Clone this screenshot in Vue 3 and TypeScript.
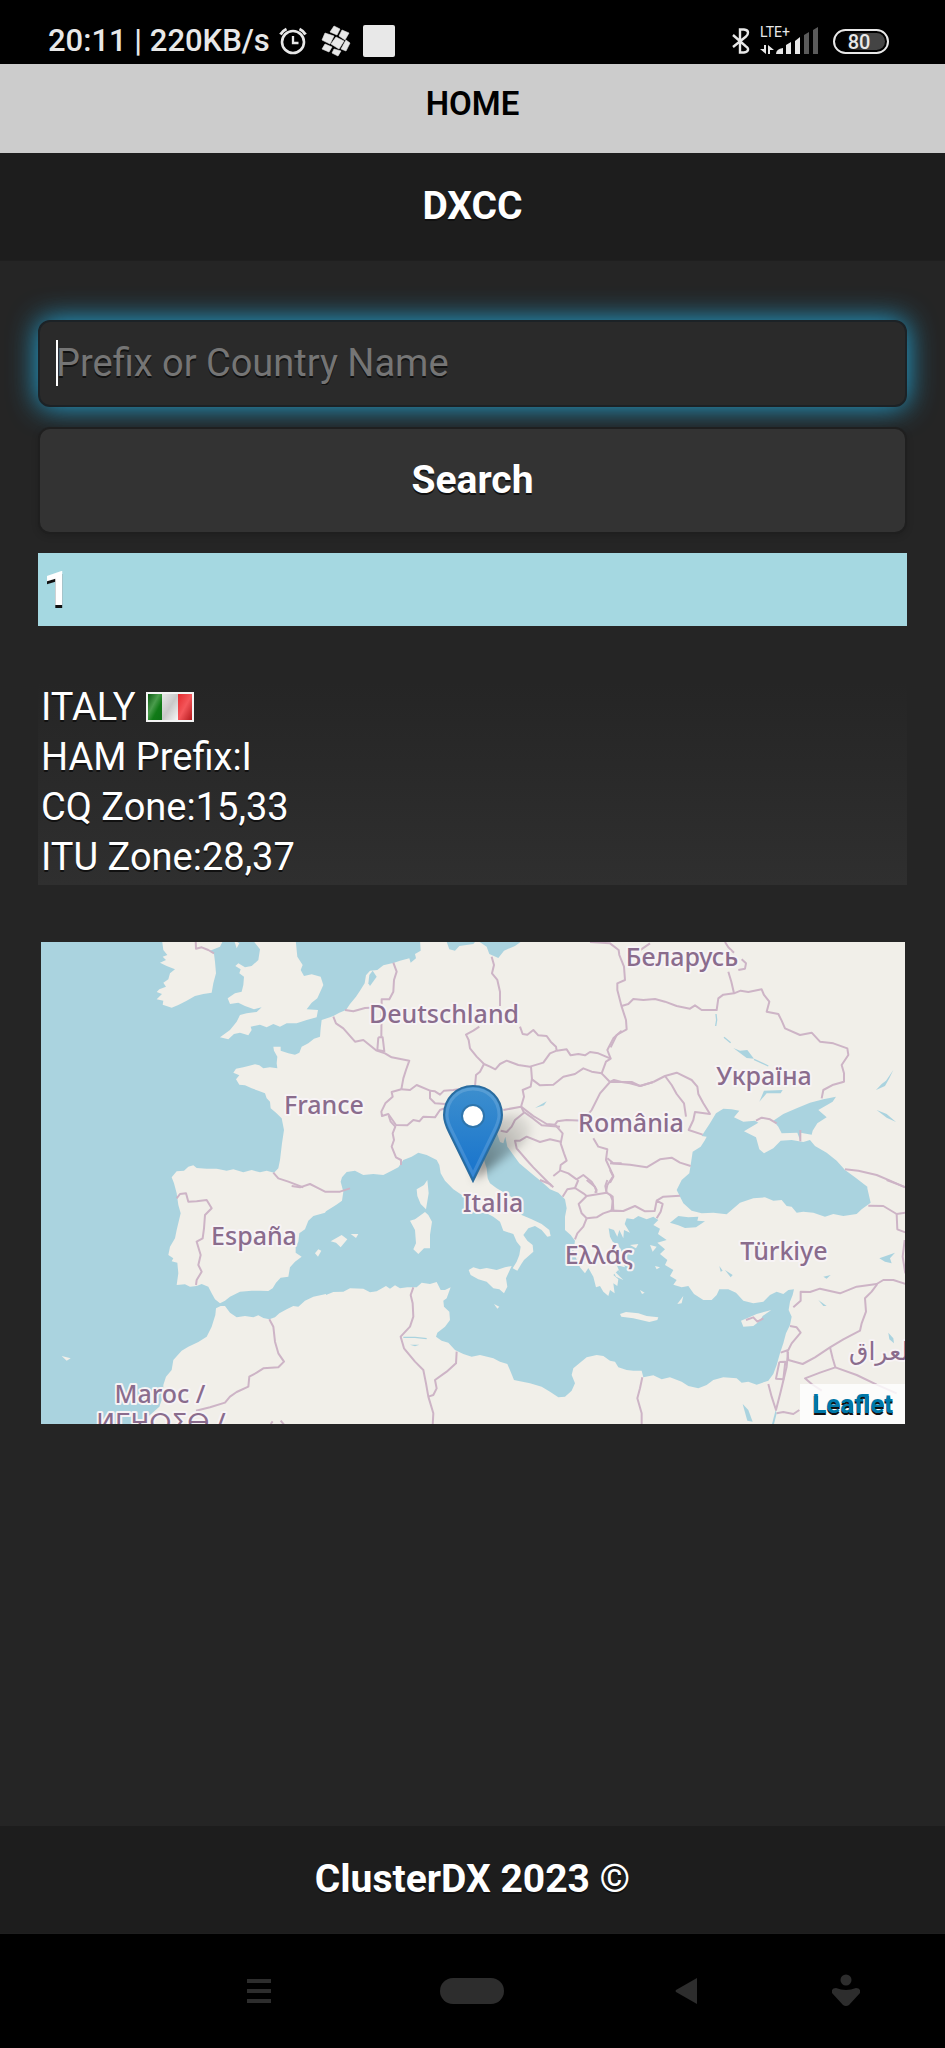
<script setup lang="ts">
import { ref } from 'vue'

interface Entity {
  name: string
  rows: { label: string; value: string }[]
}
interface MapLabel {
  text: string
  x: number
  y: number
  anchor?: 'start' | 'middle'
}
type Shift = [number, number]

const query = ref('')
const results: Entity[] = [
  {
    name: 'ITALY',
    rows: [
      { label: 'HAM Prefix', value: 'I' },
      { label: 'CQ Zone', value: '15,33' },
      { label: 'ITU Zone', value: '28,37' },
    ],
  },
]

// The outlines are stored per map tile; each tile has its own origin.
const NW: Shift = [-33, -36]
const N: Shift = [837, -36]
const NE: Shift = [1707, -36]
const SW: Shift = [-33, 714]
const S: Shift = [837, 714]
const SE: Shift = [1707, 714]

function pts(tile: Shift, data: string): string {
  return data
    .trim()
    .split(/\s+/)
    .map((p) => {
      const [x, y] = p.split(',').map(Number)
      return `${x + tile[0]},${y + tile[1]}`
    })
    .join(' ')
}

const mainland = [
  pts(N, '300,30 302,62 285,72 288,85 272,98 268,85 240,92 222,98 190,106 172,120 150,122 138,136 134,160 120,182 108,200 90,222 78,240 58,248 40,258 18,266'),
  pts(NW, '900,262 875,270 872,295 870,320 852,326 835,340 815,350 808,368 795,374 775,370 752,362 752,350 730,350 732,362 742,380 740,400 742,415 720,412 700,415 688,406 675,403 655,408 640,412 618,416 610,428 628,436 618,448 628,464 645,466 665,475 685,482 705,490 710,505 720,515 722,535 738,548 755,565 762,600 756,640 750,690 745,715 732,728 710,722 690,727 665,720 640,727 610,718 590,722 560,716 530,716 500,714 490,706 475,710 462,722 440,724 425,742 432,760 436,775'),
  pts(SW, '440,40 445,75 452,100 440,150 435,175 420,200 415,225 430,235 425,244 442,248 445,280 440,315 465,313 480,320 500,318 515,312 535,320 545,340 555,358 570,370 585,362 600,350 630,335 665,332 690,332 715,333 728,325 738,308 752,293 775,290 780,262 795,245 815,230 797,218 797,200 805,185 808,160 825,148 835,122 850,108 885,98'),
  pts(S, '18,94 48,75 66,62 70,35 62,5'),
  pts(N, '66,742 80,726 105,722 130,735 160,732 190,735 215,722 235,712 250,690 275,680 295,668 320,675 350,690 358,705 362,730 375,752'),
  pts(S, '400,28 430,48 445,70 450,95 500,100 520,110 540,125 550,152 580,162 590,185 602,200 598,225 590,245 578,265 592,272 604,252 612,240 640,215 638,195 622,182 610,165 625,145 645,138 665,150 682,170 692,168 688,150 665,132 635,118 605,105 600,70 570,48 530,25 510,10'),
  pts(N, '503,745 500,715 492,690 478,660 480,630 500,610 530,606 540,636 550,640 556,620 562,650 580,675 598,700 640,735'),
  pts(S, '665,5 690,28 715,38 735,58 740,85 735,110 735,150 752,165 765,182 760,215 780,262 795,280 805,264 820,290 828,322 840,318 850,335 865,348 870,330 884,340 880,310 892,318 895,298 880,285 895,270'),
  pts(SE, '30,278 20,255 45,262 40,245 48,230 35,215 25,195 8,185 0,170 -4,145 12,150 22,170 28,150 40,175 42,150 60,158 44,132 50,115 70,118 85,108 110,118 130,110 145,120 130,135 150,146 144,162 170,180 142,188 165,208 150,222 172,240 165,255 190,270 180,288 200,300 190,314 215,322 235,318 252,342 280,360 305,360 320,345 328,328 355,328 378,338 400,362 430,370 460,365 480,345 500,335 520,342 535,330 552,328 548,345 540,365 536,390 545,410 540,435 528,460 520,490 510,520 500,555 490,582 475,602 440,614 415,605 395,608 380,595 340,592 310,600 290,615 265,625 235,618 215,605 180,592 155,598 130,586 100,592 95,572 70,572 50,570 25,562 15,545'),
  pts(S, '870,542 850,528 830,525 800,532 780,548 760,565 755,585 765,610 755,632 735,650 715,652 690,635 665,620 630,610 600,604 582,600 572,575 562,552 540,545 520,535 480,525 455,530 430,522 405,510 385,488 365,482 348,470 352,458 375,440 390,420 388,395 372,380 370,362 380,355 392,322 375,330 362,330 350,306 330,312 305,308 290,322 262,322 240,325 225,316 210,326 198,318 170,334 150,337 130,326 90,325 70,335 40,336 18,345'),
  pts(SW, '888,342 850,350 825,362 805,380 790,378 770,388 748,400 735,412 718,418 700,414 685,406 670,412 645,408 620,412 600,398 585,378 572,378 558,385 556,405 545,440 530,470 505,486 475,500 455,512 430,540 425,570 408,590 400,615 400,645 388,680 360,705 320,740 2625,740'),
  pts(NE, '890,20'),
].join(' ')

const islands = [
  pts(NW, '396,30 400,60 412,75 398,80 408,90 390,98 410,108 435,118 420,130 415,148 400,158 408,170 388,178 380,186 396,192 380,208 400,212 398,224 425,233 445,225 470,212 495,198 520,192 545,188 550,160 558,130 555,95 552,72 540,62 570,50 580,30'),
  pts(NW, '668,30 690,58 685,90 665,108 645,112 625,100 616,108 632,118 628,130 642,140 640,165 635,185 615,190 593,205 600,222 625,218 645,228 672,238 695,232 680,246 650,250 630,255 620,275 600,300 570,322 595,328 612,312 630,308 655,316 665,300 662,290 690,284 710,292 730,282 750,290 770,280 800,280 830,270 860,262 864,240 830,238 845,218 862,205 880,165 872,140 845,133 822,138 812,120 818,105 802,80 797,30'),
  pts(NW, '612,30 620,55 628,40'),
  pts(S, '322,0 326,40 318,88 302,72 292,48 290,28 312,15'),
  pts(S, '270,122 285,118 315,96 325,105 336,125 330,165 330,205 312,205 295,222 280,208 288,190 285,150'),
  pts(S, '446,270 460,262 480,268 500,264 530,270 555,262 575,258 558,295 562,320 552,340 538,328 520,325 500,305 475,298 452,285'),
  pts(S, '32,184 65,165 82,178 62,202 48,188'),
  pts(S, '92,162 115,162 108,174'),
  pts(SW, '855,220 865,208 874,212 864,230'),
  pts(SW, '95,528 122,535 110,542'),
  pts(S, '522,372 538,380 532,386'),
  pts(SE, '30,402 48,396 85,400 110,408 145,412 142,420 118,426 70,415 34,410'),
  pts(SE, '393,422 418,412 440,402 484,390 458,408 450,422 430,438 400,440'),
  pts(SE, '202,372 220,348 215,370'),
  pts(SE, '60,195 85,192 78,205'),
  pts(SE, '120,195 140,200 128,215'),
  pts(SE, '135,258 150,262 140,268'),
  pts(SE, '90,330 104,338 96,342'),
  pts(SE, '5,265 30,290 40,300 18,290'),
]

const blackSea = [
  pts(NE, '290,620 275,618 300,580 318,550 340,536 365,538 388,542 372,562 400,575 435,572 445,578 402,604 438,622 448,658 462,670 490,655 512,632 545,630 580,636 600,630 615,648 650,668 680,692 705,720 735,742 772,770'),
  pts(SE, '772,25 782,68 755,88 740,102 700,108 670,102 645,110 610,98 580,95 560,98 545,80 530,78 515,60 490,62 465,52 430,55 390,68 350,103 310,98 275,100 245,92 220,70 205,40'),
  pts(NE, '200,780 215,750 238,730 242,705 248,665 272,650 285,630'),
].join(' ')

const lakes = [
  pts(NE, '490,572 520,552 560,535 600,518 640,508 678,500 668,515 625,540 650,562 622,580 608,602 605,614 572,608 570,630 562,608 515,610 505,590'),
  pts(SE, '180,128 205,108 235,112 265,110 262,122 285,124 258,142 225,144 205,136'),
  pts(N, '470,30 500,50 508,72 535,84 552,62 585,48 610,30'),
  pts(N, '378,30 388,58 405,62 418,48 460,42 470,30'),
  pts(N, '148,135 158,122 170,140 150,168 145,160'),
  pts(NE, '370,354 390,362 412,360 432,386 410,384'),
  pts(NE, '850,420 838,445 825,468 798,480 815,462 828,452'),
  pts(NE, '800,540 830,552 858,576 830,563'),
  pts(NE, '448,515 462,482 518,480 512,490 470,490'),
  pts(SE, '808,235 855,218 840,235 845,250 825,245'),
  pts(SE, '835,458 850,475 852,490 838,478'),
  pts(SE, '398,672 415,690 428,725 412,722'),
  pts(SE, '497,690 500,700 490,740 484,740'),
  pts(SE, '345,270 368,285 362,292'),
  pts(SE, '328,258 338,272 332,275'),
  pts(SE, '640,290 662,285 650,296'),
  pts(SE, '625,360 650,378 640,378'),
  pts(N, '645,534 680,514 672,526'),
  pts(S, '270,494 298,494 285,499'),
]
const streams = [
  pts(NE, '318,252 320,270 317,288'),
  pts(NE, '342,322 362,338'),
  pts(NE, '432,388 475,408'),
  pts(S, '250,472 285,472 320,476'),
]

const borders = [
  pts(NW, '497,30 498,56 515,52 535,60 552,70'),
  pts(N, '220,98 230,125 222,150 220,185 208,208 185,208 184,320'),
  pts(N, '175,322 188,322 193,364 172,360 175,322'),
  pts(N, '75,240 100,244 135,234 180,232'),
  pts(N, '40,260 48,280 70,295 105,335 130,330 170,362 195,370 215,382 268,392 258,420 250,445 244,478'),
  pts(N, '244,478 215,486 218,500 196,520 184,545 186,558 205,552 228,585 262,586 280,570 298,574 310,560 345,562 360,540 400,525'),
  pts(N, '244,478 270,480 290,465 330,482 330,505 345,520 375,522'),
  pts(N, '330,482 345,484 360,494 372,482 400,480 465,470'),
  pts(N, '206,556 212,575 226,590 218,610 222,630 215,650 228,682 243,690 243,705'),
  pts(N, '515,80 522,105 516,130 532,150 540,185 540,228'),
  pts(N, '600,290 608,312 622,314 640,300 655,316 680,318 692,335 708,350 710,362'),
  pts(N, '478,290 460,302 438,314 446,330 450,355 470,380 492,402 510,410 526,418 540,402 560,392 595,405 630,410 670,398 690,370 710,362'),
  pts(N, '492,402 480,425 468,435 465,470'),
  pts(N, '710,362 740,358 752,376 775,372 795,376 810,366 835,370 872,386 858,395 845,430 815,425 790,415 765,432 730,440 700,464 660,466 636,448 633,410'),
  pts(N, '636,445 632,470 608,480 612,500 603,530 550,540'),
  pts(N, '603,530 640,558 680,582 705,584 712,574 740,570 790,572 815,540 840,490 870,456 845,430'),
  pts(N, '870,456 882,450 905,456 935,456 960,468 1000,456'),
  pts(N, '603,530 612,548 585,570 575,590 560,606 542,602'),
  pts(N, '612,546 640,566 665,586 720,590'),
  pts(N, '725,636 690,628 660,636 620,620 600,632 585,632 590,655 620,690 640,712 695,768'),
  pts(N, '705,584 728,610 722,640 732,670 740,692 722,705 720,722 700,738'),
  pts(N, '722,722 745,730 770,748 790,735 815,755 830,780 825,788'),
  pts(N, '820,625 835,650 862,658 858,690 880,738 862,765 858,785'),
  pts(N, '862,685 880,700 905,700'),
  pts(N, '872,386 862,360 880,325 905,302'),
  pts(NE, '2,352 20,315 50,298 48,270 35,230 22,180 22,160 45,150 42,110 28,75 26,60 0,40 -60,36'),
  pts(NE, '35,228 55,222 70,207 100,210 135,207 165,215 200,228 240,236 255,226 275,240 320,240 325,205 340,194 372,190 364,155 355,125'),
  pts(NE, '372,190 392,182 415,186 455,178 462,195 478,215 470,245 505,252 515,272 525,295 570,315 605,308 630,335 670,340 712,355 715,375 695,405 702,430 702,455 670,464 640,480 635,505'),
  pts(NE, '345,36 355,52 372,68'),
  pts(NE, '385,120 405,116 408,100 395,88'),
  pts(NE, '85,64 120,40'),
  pts(NE, '130,456 165,438 200,428 245,450 262,470 265,492 280,520 300,552 255,546 250,570 236,600 278,614'),
  pts(NE, '0,456 35,456 60,460 90,468 130,456'),
  pts(NE, '165,438 185,465 200,492 222,520 228,560'),
  pts(NE, '0,700 60,704 110,712 150,688 185,683 210,698 242,708'),
  pts(NE, '0,720 10,740 0,758'),
  pts(NE, '705,718 745,722 800,735 840,752 885,772'),
  pts(NE, '438,572 455,563 480,568 500,580'),
  pts(NE, '571,600 571,634'),
  pts(SE, '0,42 8,62 5,92'),
  pts(SE, '0,92 40,93 75,78 105,94 134,93 140,62 158,72 152,95 140,115'),
  pts(SE, '140,62 160,50 210,47'),
  pts(SE, '775,77 820,78 860,102 888,98'),
  pts(SE, '860,102 862,148 888,158'),
  pts(SE, '830,0 888,22'),
  pts(SE, '884,180 878,230 886,280'),
  pts(SE, '550,382 572,362 572,335 600,336 630,326 690,340 740,320 800,312 820,300 850,300 888,312'),
  pts(SE, '802,312 785,335 765,355 768,395 755,430 750,452 700,478 660,502 615,532 578,552 535,540 532,510'),
  pts(SE, '540,438 560,442 572,458 545,490 535,510 512,518'),
  pts(SE, '508,546 526,545 520,598 498,596 508,546'),
  pts(SE, '534,515 530,560 512,635 498,690 485,650 475,612'),
  pts(SE, '660,502 668,535 676,562 630,578 585,595 605,612 635,632'),
  pts(SE, '676,562 740,585 800,614 860,640'),
  pts(SE, '500,700 520,696 550,702 568,690'),
  pts(SE, '97,592 90,625 82,655 95,700 95,736'),
  pts(SE, '408,420 430,412 442,425 460,415'),
  pts(S, '800,115 790,140 772,160 765,178'),
  pts(S, '800,115 785,100 776,72 800,48 860,38 878,50 880,90 850,100 830,112 800,115'),
  pts(S, '728,50 742,28 765,24 790,40 800,48'),
  pts(S, '660,0 690,12 700,22'),
  pts(S, '765,24 775,0'),
  pts(S, '800,0 825,20 830,38'),
  pts(S, '860,38 856,18 862,0'),
  pts(S, '880,92 905,93'),
  pts(S, '280,322 272,345 278,370 280,410 270,440 242,470 252,505 285,545 310,570 318,610 325,650 340,700 338,736'),
  pts(S, '410,515 408,550 380,575 345,600 350,625 340,645 325,650'),
  pts(SW, '440,55 450,42 468,40 475,65 500,64 530,60 545,85 525,105 522,145 518,175 500,185 512,225 505,255 515,275 500,300 498,315'),
  pts(NW, '730,728 745,745 775,755 820,772'),
  pts(SW, '785,18 810,22 840,12 860,22 885,35 930,35 960,25'),
  pts(SW, '718,418 730,440 735,485 745,520 762,545 745,562 700,565 680,578 658,590 655,620 620,636 600,650 585,668 540,682 498,692'),
  pts(SW, '722,732 728,724'),
  pts(SW, '752,722 762,734'),
]

const labels: MapLabel[] = [
  { text: 'Беларусь', x: 641, y: 24 },
  { text: 'Deutschland', x: 403, y: 81 },
  { text: 'Україна', x: 723, y: 143 },
  { text: 'France', x: 283, y: 172 },
  { text: 'România', x: 590, y: 190 },
  { text: 'Italia', x: 452, y: 270 },
  { text: 'España', x: 213, y: 303 },
  { text: 'Ελλάς', x: 558, y: 322 },
  { text: 'Türkiye', x: 743, y: 318 },
  { text: 'العراق', x: 808, y: 418, anchor: 'start' },
  { text: 'Maroc /', x: 119, y: 461 },
  { text: 'ⵍⵎⵖⵔⵉⴱ /', x: 120, y: 489 },
]
</script>

<template>
  <div class="page">
    <div class="status">
      <div class="status-left">
        <span class="clock">20:11 | 220KB/s</span>
        <svg class="alarm" viewBox="0 0 28 28" aria-label="Alarm">
          <circle cx="14" cy="15" r="11" fill="none" stroke="#e8e8e8" stroke-width="2.6" />
          <path d="M1.500 7.500A13 13 0 0 1 7.500 2M20.500 2a13 13 0 0 1 6 5.500" fill="none" stroke="#e8e8e8" stroke-width="3" />
          <path d="M14 9v7h5.500" fill="none" stroke="#e8e8e8" stroke-width="2.300" />
        </svg>
        <svg class="cubes" viewBox="0 0 30 32" aria-label="Service">
          <g fill="#e8e8e8" stroke="#e8e8e8" stroke-width=".6">
            <path d="M13 1l6 3-3 6-7-3z" /><path d="M21 5l7 3-4 7-6-4z" /><path d="M4 8l9 3-4 8-8-4z" />
            <path d="M15 12l8 4-5 8-8-5z" /><path d="M25 15l4 3-4 8-5-2z" /><path d="M4 19l7 3-3 5-7-3z" />
            <path d="M13 24l7 2-3 5-6-3z" />
          </g>
        </svg>
        <span class="square"></span>
      </div>
      <div class="status-right">
        <svg class="bt" viewBox="0 0 18 26" aria-label="Bluetooth">
          <path d="M1 7l13 11.500Q16.500 20 16 22t-4 2.500H8V1.500h4q4 .5 4 3t-2 4L1 19" fill="none" stroke="#e8e8e8" stroke-width="2.400" />
        </svg>
        <svg class="signal" viewBox="0 0 60 30" aria-label="Signal">
          <text x="0" y="11" class="lte">LTE+</text>
          <g fill="#e8e8e8">
            <path d="M4 19h2v9L0 23h4zM8 28V19l6 5h-4v4z" />
            <path d="M16 28q0-5 7-6v6zM26 28v-9l5-3v12zM35 28V15l5-4v17z" />
          </g>
          <path d="M44 28V9l5-3v22zM53 28V4l5-3v27z" fill="#5a5a5a" />
        </svg>
        <span class="battery"><span class="charge">80</span></span>
      </div>
    </div>

    <nav class="home"><a href="#">HOME</a></nav>
    <header class="bar"><h1>DXCC</h1></header>

    <main>
      <form @submit.prevent>
        <div class="field">
          <input v-model="query" type="text" aria-label="Prefix or Country Name" placeholder="Prefix or Country Name" />
        </div>
        <button type="submit">Search</button>
      </form>

      <section v-for="(entity, i) in results" :key="entity.name">
        <h2>{{ i + 1 }}</h2>
        <div class="details">
          <p>
            {{ entity.name }}
            <svg class="flag" viewBox="0 0 48 30" aria-label="Flag of Italy">
              <defs>
                <linearGradient id="green" x2="1" y2="1">
                  <stop offset="0" stop-color="#0b5a12" /><stop offset=".4" stop-color="#4a9c4c" /><stop offset=".65" stop-color="#117a17" /><stop offset="1" stop-color="#0d7016" />
                </linearGradient>
                <linearGradient id="white" x2="1" y2="1">
                  <stop offset="0" stop-color="#e8e8e8" /><stop offset=".5" stop-color="#c9c9c9" /><stop offset="1" stop-color="#f7f7f7" />
                </linearGradient>
                <linearGradient id="red" x2="1" y2="1">
                  <stop offset="0" stop-color="#e52a2e" /><stop offset=".5" stop-color="#f4565a" /><stop offset="1" stop-color="#b3181c" />
                </linearGradient>
              </defs>
              <path fill="#f4f4f4" d="M0 0h48v30H0z" />
              <path fill="url(#green)" d="M2 2h14v26H2z" />
              <path fill="url(#white)" d="M16 2h16v26H16z" />
              <path fill="url(#red)" d="M32 2h14v26H32z" />
            </svg>
          </p>
          <p v-for="row in entity.rows" :key="row.label">{{ row.label }}:{{ row.value }}</p>
        </div>

        <div class="map">
          <svg viewBox="0 0 864 482" role="img" aria-label="Map of Europe">
            <defs>
              <linearGradient id="pin" x2="0" y2="1">
                <stop offset="0" stop-color="#3d8fce" /><stop offset="1" stop-color="#1672cc" />
              </linearGradient>
              <linearGradient id="shade" x1="0" y1="1" x2="1" y2="0">
                <stop offset="0" stop-color="#000" stop-opacity=".5" /><stop offset="1" stop-color="#000" stop-opacity=".02" />
              </linearGradient>
              <filter id="soft" x="-30%" y="-30%" width="160%" height="160%"><feGaussianBlur stdDeviation="5" /></filter>
            </defs>
            <g transform="scale(0.33333)" stroke-linejoin="round">
              <polygon :points="mainland" class="land" />
              <polygon v-for="p in islands" :key="p" :points="p" class="land" />
              <polygon :points="blackSea" class="sea" />
              <polygon v-for="p in lakes" :key="p" :points="p" class="sea" />
              <polyline v-for="p in streams" :key="p" :points="p" class="stream" />
              <polyline v-for="p in borders" :key="p" :points="p" class="border" />
            </g>
            <text v-for="l in labels" :key="l.text" :x="l.x" :y="l.y" :text-anchor="l.anchor ?? 'middle'" class="place">{{ l.text }}</text>
            <path d="M433 238L441 200Q452 168 480 172Q500 182 482 202Z" fill="url(#shade)" filter="url(#soft)" />
            <g transform="translate(402 143)">
              <path d="M30 1C13 1 1 14 1 30c0 6 2 11 5 17l24 49 24-49c3-6 5-11 5-17C59 14 47 1 30 1z" fill="url(#pin)" stroke="#2a6c9f" stroke-width="2" />
              <path d="M30 4C15 4 4 15 4 30c0 5 2 10 5 16l21 43 21-43c3-6 5-11 5-16C56 15 45 4 30 4z" fill="none" stroke="#fff" stroke-opacity=".14" stroke-width="3" />
              <circle cx="30" cy="31" r="11" fill="#fff" stroke="#2e75ad" stroke-width="2" />
            </g>
          </svg>
          <a class="credit" href="#">Leaflet</a>
        </div>
      </section>
    </main>

    <footer class="bar"><h4>ClusterDX 2023 <span class="copy">©</span></h4></footer>

    <div class="keys">
      <button type="button" aria-label="Recent apps">
        <svg width="24" height="24" viewBox="0 0 24 24"><path d="M0 0h24v4H0zM0 10h24v4H0zM0 20h24v4H0z" /></svg>
      </button>
      <button type="button" aria-label="Home">
        <svg width="64" height="26" viewBox="0 0 64 26"><rect width="64" height="26" rx="13" /></svg>
      </button>
      <button type="button" aria-label="Back">
        <svg width="22" height="28" viewBox="0 0 22 28"><path d="M22 1v26L1 15q-1-1 0-2z" /></svg>
      </button>
      <button type="button" aria-label="Accessibility">
        <svg width="30" height="34" viewBox="0 0 30 34">
          <circle cx="15" cy="6" r="5.500" />
          <path d="M1 16q1-2 4-2 10 4 20 0 3 0 4 2v3L18 31q-3 2-6 0L1 19z" />
        </svg>
      </button>
    </div>
  </div>
</template>

<style>
body {
  margin: 0;
  background: #252525;
}
</style>

<style scoped>
.page {
  display: flex;
  flex-direction: column;
  min-height: 100vh;
  background: #252525;
  color: #fff;
  font-family: Roboto, "Liberation Sans", sans-serif;
  font-size: 38px;
  line-height: 50px;
}
h1,
h2,
h4,
p {
  margin: 0;
}
svg {
  display: block;
}
.status {
  display: flex;
  justify-content: space-between;
  align-items: flex-end;
  height: 64px;
  padding: 0 56px 0 48px;
  box-sizing: border-box;
  background: #000;
  color: #e8e8e8;
}
.status-left,
.status-right {
  display: flex;
  align-items: center;
  height: 46px;
}
.clock {
  font-size: 31px;
  font-weight: 500;
}
.alarm {
  width: 28px;
  height: 28px;
  margin: 0 14px 0 9px;
}
.cubes {
  width: 30px;
  height: 32px;
}
.square {
  width: 32px;
  height: 32px;
  margin-left: 12px;
  border-radius: 2px;
  background: #e8e8e8;
}
.bt {
  width: 18px;
  height: 26px;
}
.signal {
  width: 60px;
  height: 30px;
  margin: 0 13px 0 10px;
}
.lte {
  font-size: 14px;
  fill: #e8e8e8;
}
.battery {
  display: flex;
  width: 56px;
  height: 25px;
  padding: 2px;
  box-sizing: border-box;
  border: 2px solid #e8e8e8;
  border-radius: 13px;
}
.charge {
  flex: 1;
  padding-right: 4px;
  border-radius: 9px;
  background: linear-gradient(90deg, #000 20%, #444 60%);
  font-size: 20px;
  font-weight: 500;
  line-height: 18px;
  text-align: center;
}
.home {
  height: 89px;
  padding-top: 18px;
  box-sizing: border-box;
  background: #ccc;
  text-align: center;
  line-height: 40px;
}
.home a {
  color: #000;
  font-size: 33px;
  font-weight: 600;
  text-decoration: none;
}
.bar {
  padding: 28px 0 29px;
  border-bottom: 1px solid #1f1f1f;
  background: #1d1d1d;
  text-align: center;
  text-shadow: 0 2px 0 #111;
}
.bar h1,
.bar h4 {
  font-size: 39px;
  font-weight: 700;
}
.copy {
  font-weight: 400;
}
main {
  padding: 59px 38px 60px;
}
form {
  display: flex;
  flex-direction: column;
  gap: 20px;
}
.field {
  position: relative;
}
.field::after {
  content: "";
  position: absolute;
  left: 18px;
  top: 20px;
  width: 2px;
  height: 46px;
  background: #fff;
}
input {
  display: block;
  width: 100%;
  height: 87px;
  padding: 0 16px 2px;
  box-sizing: border-box;
  border: 2px solid #1c2226;
  border-radius: 12px;
  outline: none;
  background: #2a2a2a;
  box-shadow: 0 0 29px #2ad;
  color: #fff;
  font: inherit;
  text-shadow: 0 2px 0 #111;
}
input::placeholder {
  color: #757575;
  opacity: 1;
}
form button {
  position: relative;
  height: 107px;
  padding: 0 0 2px;
  border: 2px solid #1f1f1f;
  border-radius: 12px;
  background: #333;
  box-shadow: 0 2px 7px rgba(0, 0, 0, 0.15);
  color: #fff;
  font: inherit;
  font-size: 39px;
  font-weight: 700;
  text-shadow: 0 2px 0 #111;
}
h2 {
  margin-top: 19px;
  padding: 8px 5px 9px;
  background: #a5d8e1;
  font-size: 49px;
  line-height: 56px;
  text-shadow: 0 3px 0 #111;
}
.details {
  margin-top: 56px;
  padding: 0 0 3px 3px;
  background: linear-gradient(#252525, #2f2f2f);
  text-shadow: 0 2px 0 #111;
}
.details p {
  display: flex;
  align-items: center;
  gap: 10px;
}
.flag {
  width: 48px;
  height: 30px;
}
.map {
  position: relative;
  margin: 57px 2px 0 3px;
  overflow: hidden;
  background: #aad3df;
}
.map svg {
  width: 100%;
  height: auto;
}
.land {
  fill: #f1efe9;
}
.sea {
  fill: #aad3df;
}
.stream {
  fill: none;
  stroke: #aad3df;
  stroke-width: 4px;
}
.border {
  fill: none;
  stroke: #cdb4c6;
  stroke-width: 6px;
}
.place {
  fill: #8a6c8d;
  stroke: #f7f3f5;
  stroke-width: 4px;
  stroke-linejoin: round;
  paint-order: stroke;
  font-family: "Noto Sans", "DejaVu Sans", sans-serif;
  font-size: 25px;
  font-weight: 500;
}
.credit {
  position: absolute;
  right: 0;
  bottom: 0;
  padding: 0 12px;
  background: rgba(255, 255, 255, 0.8);
  color: #0078a8;
  font-size: 26px;
  font-weight: 700;
  line-height: 40px;
  text-decoration: none;
  text-shadow: 0 2px 0 #111;
}
footer {
  margin-top: auto;
}
.keys {
  display: grid;
  grid-template-columns: 2fr 2fr 2fr 1fr;
  height: 114px;
  padding: 0 46px 0 152px;
  background: #000;
}
.keys button {
  display: flex;
  align-items: center;
  justify-content: center;
  padding: 0;
  border: 0;
  background: none;
}
.keys svg {
  fill: #2d2d2d;
}
</style>
